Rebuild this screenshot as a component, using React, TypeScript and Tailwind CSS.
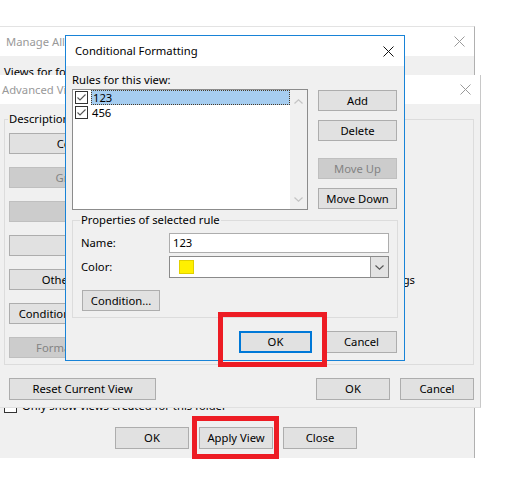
import React from "react";

const btn = "flex items-center justify-center border border-[#adadad] bg-[#e1e1e1] text-black whitespace-nowrap";
const btnOff = "flex items-center justify-center border border-[#bfbfbf] bg-[#cccccc] text-[#838383] whitespace-nowrap";

function CloseX({ color }: { color: string }) {
  return (
    <svg width="11" height="11" viewBox="0 0 11 11" className="shrink-0">
      <path d="M0.5 0.5 L10.5 10.5 M10.5 0.5 L0.5 10.5" stroke={color} strokeWidth="1" fill="none" />
    </svg>
  );
}

function CheckBox({ checked }: { checked: boolean }) {
  return (
    <div className="w-[13px] h-[13px] border border-[#333333] bg-white shrink-0 flex items-center justify-center">
      {checked && (
        <svg width="11" height="11" viewBox="0 0 11 11">
          <path d="M1.5 5.5 L4 8 L9.5 2.5" stroke="#555555" strokeWidth="1.1" fill="none" />
        </svg>
      )}
    </div>
  );
}

type SideButton = { label: string; enabled: boolean; note?: string };

const viewButtons: SideButton[] = [
  { label: "Columns...", enabled: true },
  { label: "Group By...", enabled: false },
  { label: "Sort...", enabled: false },
  { label: "Filter...", enabled: true },
  { label: "Other Settings...", enabled: true, note: "Fonts and other Compact View settings" },
  { label: "Conditional Formatting...", enabled: true },
  { label: "Format Columns...", enabled: false },
];

function ManageAllViews() {
  return (
    <div className="absolute left-0 top-[26px] w-[475px] h-[432px] border-t border-r border-t-[#e3e3e3] border-r-[#b0b0b0] bg-[#f0f0f0] flex flex-col">
      <div className="h-[29px] bg-white flex items-center justify-between pl-[6px] pr-[9px]">
        <span className="text-[#999999]">Manage All Views</span>
        <CloseX color="#9a9a9a" />
      </div>
      <div className="flex-1 flex flex-col pt-[8px] pb-[9px]">
        <div className="pl-[4px] leading-[15px]">Views for folder "Inbox":</div>
        <div className="flex-1" />
        <div className="h-[16px] flex items-center pl-[4px] gap-[5px]">
          <CheckBox checked={false} />
          <span>Only show views created for this folder</span>
        </div>
        <div className="mt-[13px] flex h-[22px] pl-[115px] gap-[10px]">
          <div className={`${btn} w-[74px]`}>OK</div>
          <div className={`${btn} w-[74px]`}>Apply View</div>
          <div className={`${btn} w-[74px]`}>Close</div>
        </div>
      </div>
    </div>
  );
}

function AdvancedViewSettings() {
  return (
    <div className="absolute left-0 top-[75px] w-[481px] h-[333px] border-r border-b border-r-[#c8c8c8] border-b-[#e0e0e0] bg-[#f0f0f0] flex flex-col">
      <div className="h-[29px] bg-white flex items-center justify-between pl-[2px] pr-[9px]">
        <span className="text-[#999999]">Advanced View Settings: Compact</span>
        <CloseX color="#9a9a9a" />
      </div>
      <div className="relative mt-[15px] ml-[4px] w-[470px] h-[246px] border border-[#dcdcdc] pt-[13px] pl-[4px]">
        <span className="absolute left-[3px] top-[-8px] bg-[#f0f0f0] px-[1px] leading-[14px]">Description</span>
        <div className="flex flex-col gap-[13px]">
          {viewButtons.map((b) => (
            <div key={b.label} className="flex items-center h-[21px]">
              <div className={`${b.enabled ? btn : btnOff} w-[151px] h-[21px]`}>{b.label}</div>
              {b.note && <span className="ml-[11px] w-[244px] text-right whitespace-nowrap">{b.note}</span>}
            </div>
          ))}
        </div>
      </div>
      <div className="mt-[13px] flex h-[22px]">
        <div className={`${btn} ml-[9px] w-[147px]`}>Reset Current View</div>
        <div className={`${btn} ml-[160px] w-[74px]`}>OK</div>
        <div className={`${btn} ml-[10px] w-[74px]`}>Cancel</div>
      </div>
    </div>
  );
}

function ConditionalFormatting() {
  return (
    <div className="absolute left-[65px] top-[35px] w-[340px] h-[326px] border border-[#1883d7] bg-[#f0f0f0] flex flex-col">
      <div className="h-[30px] bg-white flex items-center justify-between pl-[9px] pr-[10px]">
        <span className="text-black">Conditional Formatting</span>
        <CloseX color="#111111" />
      </div>
      <div className="flex-1 flex flex-col pl-[6px] pt-[7px]">
        <div className="flex items-start">
          <div className="w-[236px] flex flex-col">
            <div className="h-[14px] leading-[14px]">Rules for this view:</div>
            <div className="mt-[2px] h-[121px] border border-[#8c8c8c] bg-white flex">
              <div className="flex-1 flex flex-col">
                <div className="h-[15px] flex items-center pl-[2px]">
                  <CheckBox checked />
                  <div className="ml-[3px] flex-1 h-[15px] bg-[#a6cdf0] border border-dotted border-[#4a3c28] flex items-center pl-[1px] leading-[13px]">
                    123
                  </div>
                </div>
                <div className="h-[15px] flex items-center pl-[2px]">
                  <CheckBox checked />
                  <span className="ml-[4px] leading-[13px]">456</span>
                </div>
              </div>
              <div className="w-[17px] bg-[#f0f0f0] flex flex-col items-center justify-between pt-[9px] pb-[7px]">
                <svg width="9" height="5" viewBox="0 0 9 5">
                  <path d="M0.5 4.5 L4.5 0.8 L8.5 4.5" stroke="#c4c4c4" strokeWidth="1.2" fill="none" />
                </svg>
                <svg width="9" height="5" viewBox="0 0 9 5">
                  <path d="M0.5 0.5 L4.5 4.2 L8.5 0.5" stroke="#c4c4c4" strokeWidth="1.2" fill="none" />
                </svg>
              </div>
            </div>
          </div>
          <div className="ml-[10px] mt-[17px] flex flex-col">
            <div className={`${btn} w-[79px] h-[21px]`}>Add</div>
            <div className={`${btn} mt-[9px] w-[79px] h-[21px]`}>Delete</div>
            <div className={`${btnOff} mt-[17px] w-[79px] h-[21px]`}>Move Up</div>
            <div className={`${btn} mt-[9px] w-[79px] h-[21px]`}>Move Down</div>
          </div>
        </div>

        <div className="relative mt-[10px] w-[326px] h-[98px] border border-[#dcdcdc] pt-[12px] pl-[8px]">
          <span className="absolute left-[7px] top-[-8px] bg-[#f0f0f0] px-[1px] leading-[14px]">
            Properties of selected rule
          </span>
          <div className="flex items-center h-[20px]">
            <span className="w-[88px]">Name:</span>
            <div className="w-[220px] h-[20px] bg-white border border-[#adadad] flex items-center pl-[3px]">123</div>
          </div>
          <div className="mt-[3px] flex items-center h-[22px]">
            <span className="w-[88px]">Color:</span>
            <div className="w-[220px] h-[22px] bg-white border border-[#8a8a8a] flex items-center">
              <div className="ml-[9px] w-[15px] h-[14px] bg-[#fff000] border border-[#e0d000]" />
              <div className="flex-1" />
              <div className="w-[18px] h-full bg-[#e3e3e3] border-l border-[#9a9a9a] flex items-center justify-center">
                <svg width="9" height="5" viewBox="0 0 9 5">
                  <path d="M0.5 0.5 L4.5 4.2 L8.5 0.5" stroke="#555555" strokeWidth="1.1" fill="none" />
                </svg>
              </div>
            </div>
          </div>
          <div className={`${btn} mt-[12px] ml-[1px] w-[78px] h-[21px]`}>Condition...</div>
        </div>

        <div className="mt-[13px] flex h-[22px]">
          <div className="ml-[167px] w-[73px] h-[22px] border-2 border-[#0078d7] bg-[#e1e1e1] flex items-center justify-center">
            OK
          </div>
          <div className={`${btn} ml-[14px] w-[71px] h-[22px]`}>Cancel</div>
        </div>
      </div>
    </div>
  );
}

export default function App() {
  return (
    <div className="relative w-[509px] h-[489px] overflow-hidden bg-white text-black font-['Noto_Sans',sans-serif] text-[11.25px] leading-[14px]">
      <ManageAllViews />
      <AdvancedViewSettings />
      <ConditionalFormatting />
      {/* red call-outs drawn over the dialogs */}
      <div className="absolute left-[218px] top-[312px] w-[109px] h-[55px] border-[5px] border-[#ed1c24]" />
      <div className="absolute left-[192px] top-[416px] w-[87px] h-[43px] border-[5px] border-[#ed1c24]" />
    </div>
  );
}
